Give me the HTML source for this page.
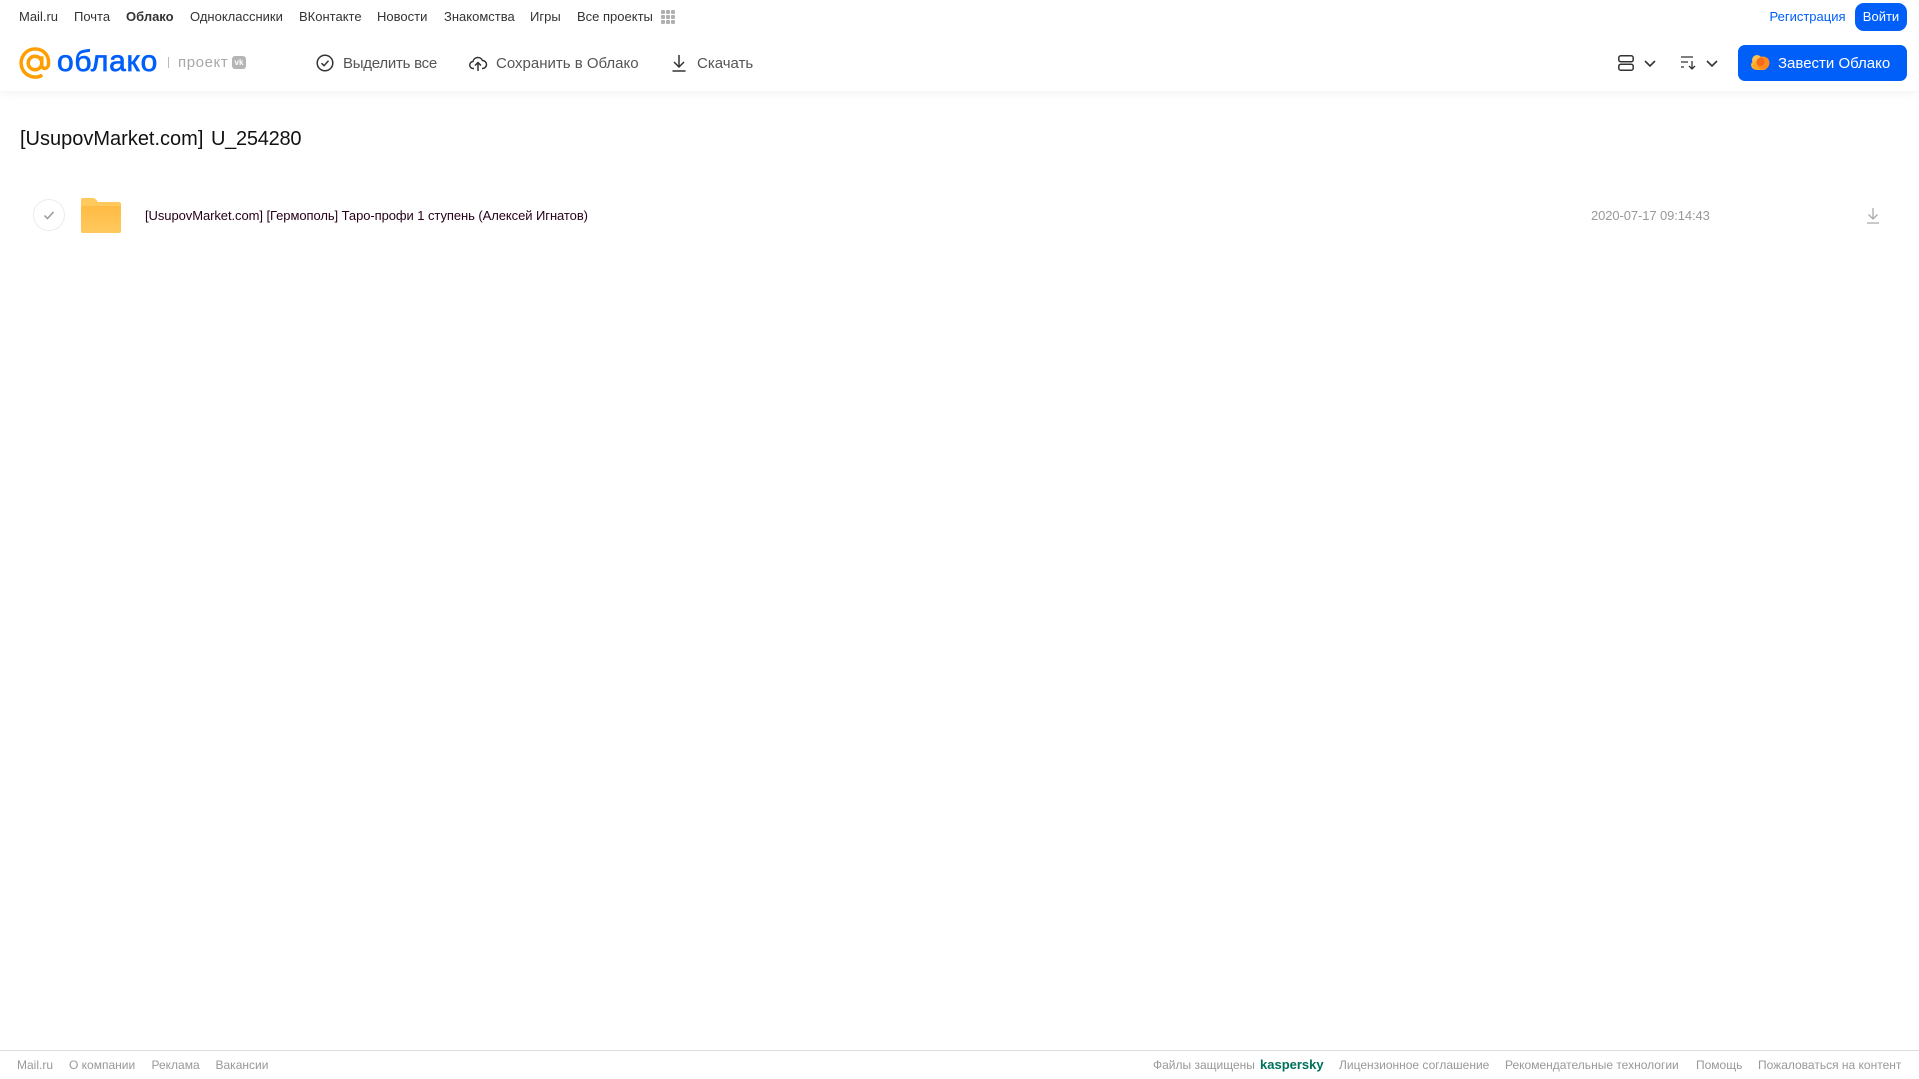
<!DOCTYPE html>
<html lang="ru">
<head>
<meta charset="utf-8">
<title>Облако</title>
<style>
html,body{margin:0;padding:0;width:1919px;height:1079px;overflow:hidden;background:#fff;font-family:"Liberation Sans",sans-serif}
.t{position:absolute;white-space:nowrap;line-height:16px}
.n{top:9px;font-size:13px;color:#333}
.a{top:54px;font-size:15px;color:#555;line-height:18px}
.f{top:1057px;font-size:12px;color:#999}
svg{position:absolute;overflow:visible}
</style>
</head>
<body>
<div style="position:absolute;left:0;top:0;width:1919px;height:91px;background:#fff;box-shadow:0 1px 10px rgba(0,0,0,.06)"></div>

<span class="t n" style="left:19px">Mail.ru</span>
<span class="t n" style="left:74px">Почта</span>
<span class="t n" style="left:126px;font-weight:bold">Облако</span>
<span class="t n" style="left:190px">Одноклассники</span>
<span class="t n" style="left:299px">ВКонтакте</span>
<span class="t n" style="left:377px">Новости</span>
<span class="t n" style="left:444px">Знакомства</span>
<span class="t n" style="left:530px">Игры</span>
<span class="t n" style="left:577px">Все проекты</span>
<svg style="left:661px;top:10px" width="14" height="14" fill="#b0b0b0"><rect x="0" y="0" width="4" height="4" rx="1"/><rect x="5" y="0" width="4" height="4" rx="1"/><rect x="10" y="0" width="4" height="4" rx="1"/><rect x="0" y="5" width="4" height="4" rx="1"/><rect x="5" y="5" width="4" height="4" rx="1"/><rect x="10" y="5" width="4" height="4" rx="1"/><rect x="0" y="10" width="4" height="4" rx="1"/><rect x="5" y="10" width="4" height="4" rx="1"/><rect x="10" y="10" width="4" height="4" rx="1"/></svg>

<span class="t n" style="left:1769.5px;color:#005ff9">Регистрация</span>
<div class="t" style="left:1855px;top:3px;width:52px;height:28px;border-radius:9px;background:#005ff9;color:#fff;font-size:13px;line-height:27px;text-align:center">Войти</div>

<svg style="left:19px;top:47px" width="32" height="32" viewBox="0 0 33 33" fill="none" stroke="#ff9e00" stroke-width="3.600"><circle cx="16.500" cy="16.500" r="7"/><path d="M23.500 9.500v9c0 5 6.500 5 7-1 .8-9-5.500-15.500-14-15.500A14.500 14.500 0 1 0 24 29"/></svg>
<span class="t" style="left:57px;top:44px;font-size:30px;line-height:36px;color:#005ff9;letter-spacing:.7px;-webkit-text-stroke:.7px #005ff9">облако</span>
<div style="position:absolute;left:168px;top:57px;width:1px;height:11px;background:#bbb"></div>
<span class="t" style="left:178px;top:54px;font-size:15px;line-height:17px;color:#a8a8a8;letter-spacing:.6px">проект</span>
<div class="t" style="left:232px;top:56px;width:14px;height:13px;border-radius:3px;background:#b5b5b5;color:#fff;font-size:8px;line-height:13px;text-align:center;font-weight:bold">vk</div>

<svg style="left:316px;top:54px" width="18" height="18" viewBox="0 0 18 18" fill="none" stroke="#333" stroke-width="1.500"><circle cx="9" cy="9" r="7.800"/><path d="M5.500 9.200l2.500 2.500 4.500-5"/></svg>
<span class="t a" style="left:343px;top:55px;letter-spacing:-.25px">Выделить все</span>
<svg style="left:469px;top:54px" width="18" height="18" viewBox="0 0 18 18" fill="none" stroke="#333" stroke-width="1.500"><path d="M5 14.500H4.500a3.500 3.500 0 0 1-.5-7A5 5 0 0 1 13.500 6.500a4 4 0 0 1 0 8H13"/><path d="M9 17V9M6 11.500l3-3 3 3"/></svg>
<span class="t a" style="left:496px;top:55px">Сохранить в Облако</span>
<svg style="left:671px;top:54px" width="16" height="18" viewBox="0 0 16 18" fill="none" stroke="#333" stroke-width="1.500"><path d="M8 1v12M3 8l5 5 5-5M1.500 17h13"/></svg>
<span class="t a" style="left:697px;top:55px">Скачать</span>

<svg style="left:1618px;top:55px" width="16" height="16" viewBox="0 0 16 16" fill="none" stroke="#333" stroke-width="1.500"><rect x=".8" y=".8" width="14.400" height="6" rx="2"/><rect x=".8" y="9.200" width="14.400" height="6" rx="2"/></svg>
<svg style="left:1644px;top:60px" width="12" height="7" viewBox="0 0 12 7" fill="none" stroke="#333" stroke-width="1.600"><path d="M1 1l5 5 5-5"/></svg>
<svg style="left:1681px;top:56px" width="16" height="14" viewBox="0 0 16 14" fill="none" stroke="#333" stroke-width="1.300"><path d="M0 1h12M0 6h7M0 11h3M11 5v8M8 10l3 3 3-3"/></svg>
<svg style="left:1706px;top:60px" width="12" height="7" viewBox="0 0 12 7" fill="none" stroke="#333" stroke-width="1.600"><path d="M1 1l5 5 5-5"/></svg>

<div style="position:absolute;left:1738px;top:45px;width:169px;height:36px;border-radius:7px;background:#005ff9"></div>
<svg style="left:1751px;top:54px" width="19" height="16" viewBox="0 0 19 16"><circle cx="6" cy="6" r="5" fill="#ffc14d"/><circle cx="4.500" cy="11" r="4.500" fill="#ffb133"/><rect x="2" y="9" width="14" height="7" rx="3.500" fill="#ffa726"/><circle cx="12" cy="9" r="6.500" fill="#ff8a1f"/><circle cx="9.500" cy="8" r="4" fill="#f76b1c"/></svg>
<span class="t a" style="left:1778px;top:55px;color:#fff">Завести Облако</span>

<span class="t" style="left:20px;top:126px;font-size:20px;line-height:26px;color:#111;word-spacing:2px">[UsupovMarket.com] <span style="letter-spacing:-.25px">U_254280</span></span>

<svg style="left:33px;top:199px" width="32" height="32" viewBox="0 0 32 32" fill="none"><circle cx="16" cy="16" r="15.500" stroke="#ececec"/><path d="M11.500 16.500l3 3 6-6.500" stroke="#999" stroke-width="1.500"/></svg>
<svg style="left:81px;top:197px" width="40" height="36" viewBox="0 0 40 36"><defs><linearGradient id="fg" x1="0" y1="0" x2="0" y2="1"><stop offset="0" stop-color="#ffbb44"/><stop offset="1" stop-color="#ffc95e"/></linearGradient></defs><path d="M2 1h9c3 0 4 1 6 4h21a2 2 0 0 1 2 2v27a2 2 0 0 1-2 2H2a2 2 0 0 1-2-2V3a2 2 0 0 1 2-2z" fill="#ffc95e"/><path d="M2 9h36a2 2 0 0 1 2 2v23a2 2 0 0 1-2 2H2a2 2 0 0 1-2-2V11a2 2 0 0 1 2-2z" fill="url(#fg)"/></svg>
<span class="t" style="left:145px;top:208px;font-size:13px;letter-spacing:-.07px;color:#26001a">[UsupovMarket.com] [Гермополь] Таро-профи 1 ступень (Алексей Игнатов)</span>
<span class="t" style="left:1591px;top:208px;font-size:13px;letter-spacing:-.1px;color:#999">2020-07-17 09:14:43</span>
<svg style="left:1866px;top:207px" width="14" height="17" viewBox="0 0 14 17" fill="none" stroke="#aaa" stroke-width="1.300"><path d="M7 1v11M2.500 7.500L7 12l4.500-4.500M1 16h12"/></svg>

<div style="position:absolute;left:0;top:1050px;width:1919px;height:1px;background:#ddd"></div>
<span class="t f" style="left:17px">Mail.ru</span>
<span class="t f" style="left:69px">О компании</span>
<span class="t f" style="left:151.500px">Реклама</span>
<span class="t f" style="left:215.500px">Вакансии</span>
<span class="t f" style="left:1153px">Файлы защищены</span>
<span class="t f" style="left:1260px;color:#00705a;font-weight:bold;font-size:13px">kaspersky</span>
<span class="t f" style="left:1339px">Лицензионное соглашение</span>
<span class="t f" style="left:1505px">Рекомендательные технологии</span>
<span class="t f" style="left:1696px">Помощь</span>
<span class="t f" style="left:1758px">Пожаловаться на контент</span>
</body>
</html>
